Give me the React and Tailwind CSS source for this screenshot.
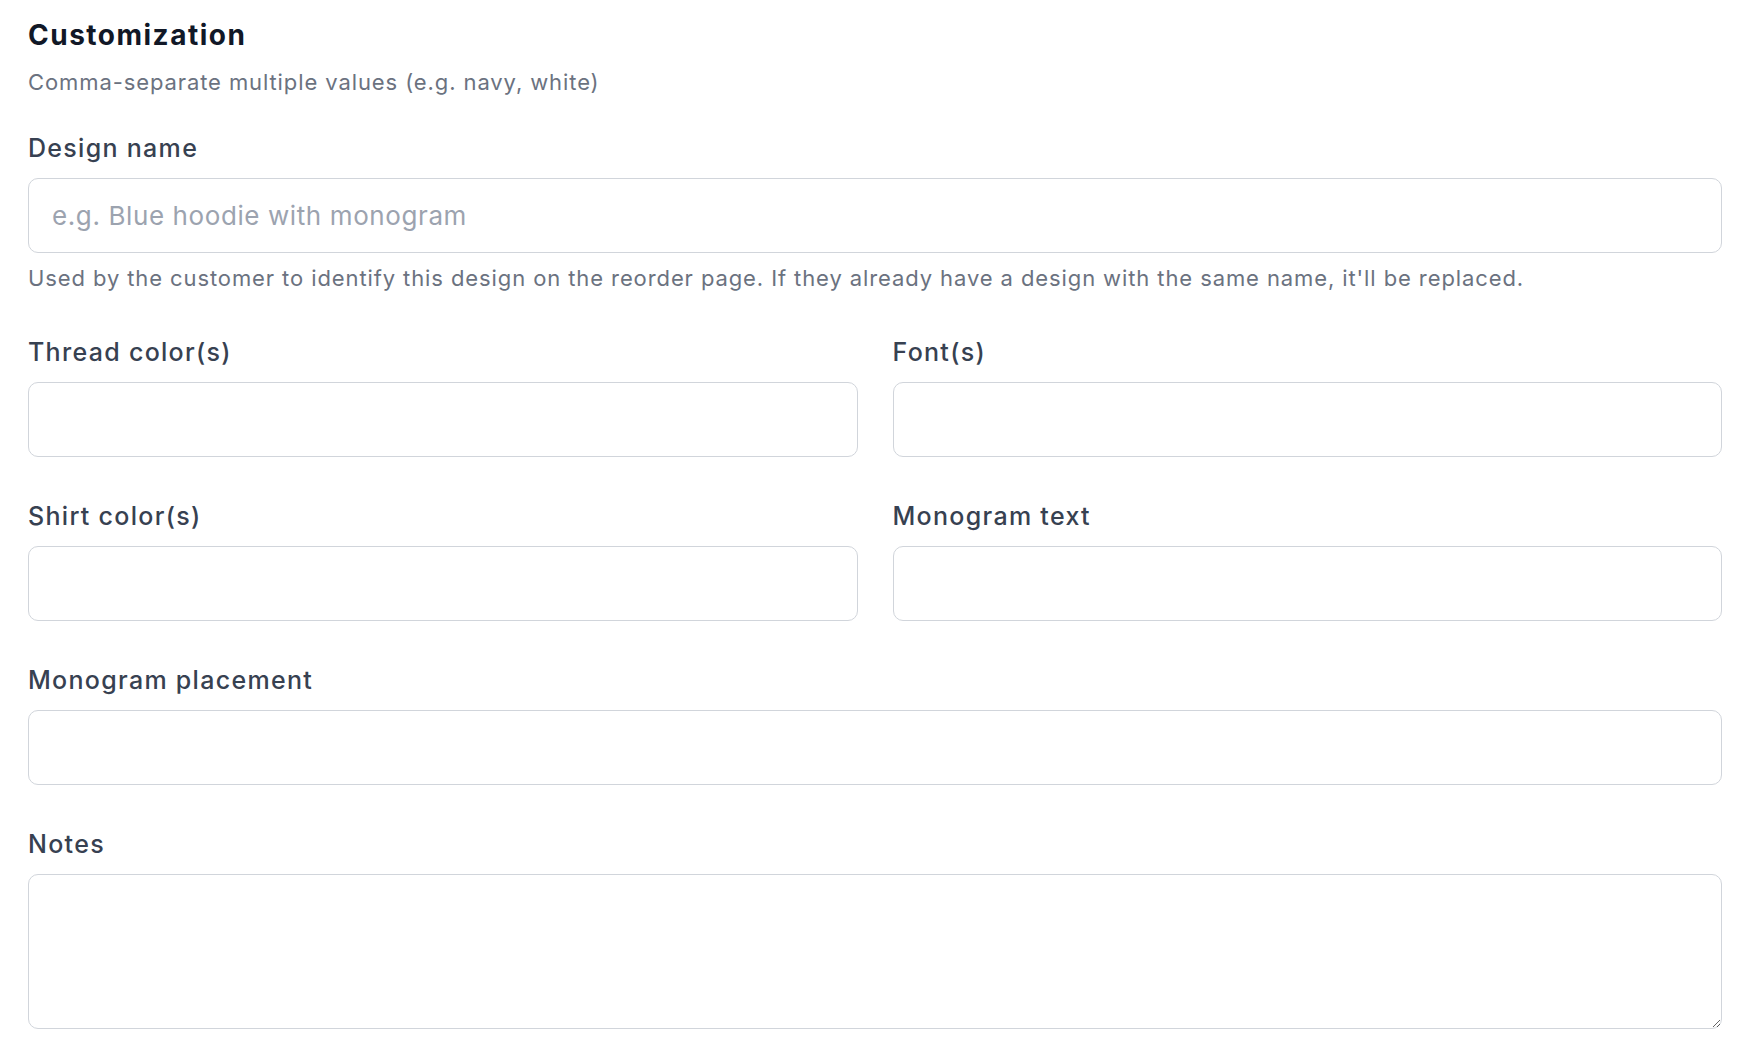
import React from 'react';

const inputCls =
    'block w-full h-[75px] rounded-[10px] border-[1.5px] border-[#d1d5db] bg-white px-[23px] text-[26px] tracking-[0.6px] text-[#111827] placeholder:text-[#9ca3af] outline-none';

const Field = ({ label, children }) => (
    <div>
        <label className="block text-[25px] leading-[37px] tracking-[1.3px] font-medium text-[#374151] mb-[11px]">{label}</label>
        {children}
    </div>
);

export default function App() {
    return (
        <div className="min-h-screen bg-white pl-[28px] pr-[38px] pt-[15px] pb-[30px] font-['Inter',sans-serif]">
            {/* Header */}
            <h2 className="text-[28px] leading-[40px] font-bold tracking-[1.5px] text-[#111827]">Customization</h2>
            <p className="mt-[12px] text-[22px] leading-[31px] tracking-[0.9px] text-[#6b7280]">
                Comma-separate multiple values (e.g. navy, white)
            </p>

            {/* Design name */}
            <div className="mt-[32px]">
                <Field label="Design name">
                    <input type="text" className={inputCls} placeholder="e.g. Blue hoodie with monogram" />
                </Field>
                <p className="mt-[10px] text-[22px] leading-[31px] tracking-[0.9px] text-[#6b7280]">
                    Used by the customer to identify this design on the reorder page. If they already have a design with the same name, it'll be replaced.
                </p>
            </div>

            {/* Grid fields */}
            <div className="mt-[40px] grid grid-cols-2 gap-x-[35px] gap-y-[41px]">
                <Field label="Thread color(s)">
                    <input type="text" className={inputCls} />
                </Field>
                <Field label="Font(s)">
                    <input type="text" className={inputCls} />
                </Field>
                <Field label="Shirt color(s)">
                    <input type="text" className={inputCls} />
                </Field>
                <Field label="Monogram text">
                    <input type="text" className={inputCls} />
                </Field>
                <div className="col-span-2">
                    <Field label="Monogram placement">
                        <input type="text" className={inputCls} />
                    </Field>
                </div>
                <div className="col-span-2">
                    <Field label="Notes">
                        <textarea
                            className="block w-full h-[155px] rounded-[10px] border-[1.5px] border-[#d1d5db] bg-white px-[23px] py-[14px] text-[26px] text-[#111827] outline-none"
                        />
                    </Field>
                </div>
            </div>
        </div>
    );
}
